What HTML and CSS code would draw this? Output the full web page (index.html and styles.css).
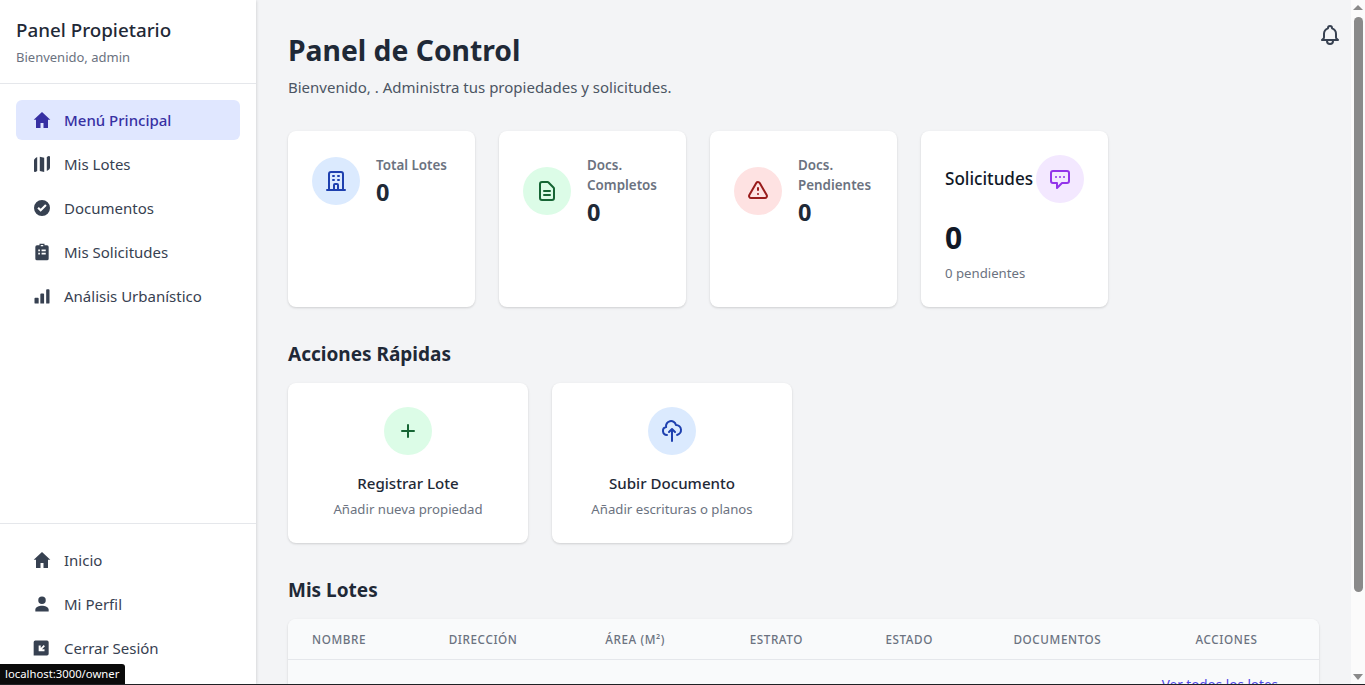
FILE: index.html
```html
<!DOCTYPE html>
<html lang="es">
<head>
<meta charset="utf-8">
<title>Panel Propietario</title>
<link rel="stylesheet" href="styles.css">
</head>
<body>
<div class="app">
  <aside class="sidebar">
    <header class="brand">
      <h1>Panel Propietario</h1>
      <p>Bienvenido, admin</p>
    </header>
    <nav class="nav nav-main">
      <a class="nav-item active"><svg class="ni" viewBox="0 0 20 20"><path d="M10 2 18.300 9.800H16V18H11.500V13H8.500V18H4V9.800H1.700z"/></svg>Menú Principal</a>
      <a class="nav-item"><svg class="ni" viewBox="0 0 20 20"><path d="M5.200 3V17L3.400 18C2.700 18.200 2 17.700 2 17V6.500C2 5.500 2.600 4.500 5.200 3zM7.800 2.800 12.200 3.800V18L7.800 17zM14.800 3 16.600 2C17.300 1.800 18 2.300 18 3V13.500C18 14.700 17.400 15.600 14.800 17z"/></svg>Mis Lotes</a>
      <a class="nav-item"><svg class="ni" viewBox="0 0 24 24"><path fill-rule="evenodd" d="M12 2.400a9.600 9.600 0 1 0 0 19.200 9.600 9.600 0 0 0 0-19.200zm-1.600 14.200-4-4 1.800-1.800 2.200 2.200 5.400-5.400 1.800 1.800z"/></svg>Documentos</a>
      <a class="nav-item"><svg class="ni" viewBox="0 0 24 24"><path fill-rule="evenodd" d="M9 2h6v2h3a2 2 0 0 1 2 2v14a2 2 0 0 1-2 2H6a2 2 0 0 1-2-2V6a2 2 0 0 1 2-2h3zM7.500 9v2h2V9zm4 0v2h5V9zm-4 4v2h2v-2zm4 0v2h5v-2zM10.500 3.500v1.500h3V3.500z"/></svg>Mis Solicitudes</a>
      <a class="nav-item"><svg class="ni" viewBox="0 0 24 24"><path d="M3 15a1 1 0 0 1 1-1h3a1 1 0 0 1 1 1v6H4a1 1 0 0 1-1-1zM10 10a1 1 0 0 1 1-1h2.500a1 1 0 0 1 1 1v11H10zM17 5a1 1 0 0 1 1-1h2a1 1 0 0 1 1 1v15a1 1 0 0 1-1 1h-3z"/></svg>Análisis Urbanístico</a>
    </nav>
    <nav class="nav nav-foot">
      <a class="nav-item"><svg class="ni" viewBox="0 0 20 20"><path d="M10 2 18.300 9.800H16V18H11.500V13H8.500V18H4V9.800H1.700z"/></svg>Inicio</a>
      <a class="nav-item"><svg class="ni" viewBox="0 0 24 24"><path d="M12 12a4.500 4.500 0 1 0 0-9 4.500 4.500 0 0 0 0 9zm0 2c-3.500 0-8 1.800-8 4.500V21h16v-2.500c0-2.700-4.500-4.500-8-4.500z"/></svg>Mi Perfil</a>
      <a class="nav-item"><svg class="ni" viewBox="0 0 24 24"><path fill-rule="evenodd" d="M4 3h14a2 2 0 0 1 2 2v14a2 2 0 0 1-2 2H2V5a2 2 0 0 1 2-2zm10 5.500L10.500 12V9H8v7h7v-2.500h-3l3.500-3.500z"/></svg>Cerrar Sesión</a>
    </nav>
  </aside>
  <main class="main">
    <button class="bell" aria-label="Notificaciones"><svg viewBox="0 0 24 24"><path d="M15 17h5l-1.405-1.405A2.032 2.032 0 0 1 18 14.158V11a6.002 6.002 0 0 0-4-5.659V5a2 2 0 1 0-4 0v.341C7.670 6.165 6 8.388 6 11v3.159c0 .538-.214 1.055-.595 1.436L4 17h5m6 0v1a3 3 0 1 1-6 0v-1m6 0H9"/></svg></button>
    <h2 class="title">Panel de Control</h2>
    <p class="subtitle">Bienvenido, . Administra tus propiedades y solicitudes.</p>

    <section class="stats">
      <article class="card stat">
        <div class="stat-row">
          <span class="disc disc-blue"><svg viewBox="0 0 24 24"><path d="M19 21V5a2 2 0 0 0-2-2H7a2 2 0 0 0-2 2v16m14 0h2m-2 0h-5m-9 0H3m2 0h5M9 7h1m-1 4h1m4-4h1m-1 4h1m-5 10v-5a1 1 0 0 1 1-1h2a1 1 0 0 1 1 1v5m-4 0h4"/></svg></span>
          <div><h3>Total Lotes</h3><strong>0</strong></div>
        </div>
      </article>
      <article class="card stat">
        <div class="stat-row">
          <span class="disc disc-green"><svg viewBox="0 0 24 24"><path d="M9 12h6m-6 4h6m2 5H7a2 2 0 0 1-2-2V5a2 2 0 0 1 2-2h5.586a1 1 0 0 1 .707.293l5.414 5.414a1 1 0 0 1 .293.707V19a2 2 0 0 1-2 2z"/></svg></span>
          <div><h3>Docs. Completos</h3><strong>0</strong></div>
        </div>
      </article>
      <article class="card stat">
        <div class="stat-row">
          <span class="disc disc-red"><svg viewBox="0 0 24 24"><path d="M12 9v2m0 4h.01m-6.938 4h13.856c1.540 0 2.502-1.667 1.732-3L13.732 4c-.77-1.333-2.694-1.333-3.464 0L3.340 16c-.77 1.333.192 3 1.732 3z"/></svg></span>
          <div><h3>Docs. Pendientes</h3><strong>0</strong></div>
        </div>
      </article>
      <article class="card requests">
        <div class="req-head">
          <h3>Solicitudes</h3>
          <span class="disc disc-purple"><svg viewBox="0 0 24 24"><path d="M8 10h.01M12 10h.01M16 10h.01M9 16H5a2 2 0 0 1-2-2V6a2 2 0 0 1 2-2h14a2 2 0 0 1 2 2v8a2 2 0 0 1-2 2h-5l-5 5v-5z"/></svg></span>
        </div>
        <strong>0</strong>
        <p>0 pendientes</p>
      </article>
    </section>

    <h2 class="section-title">Acciones Rápidas</h2>
    <section class="actions">
      <article class="card action">
        <span class="disc disc-green"><svg viewBox="0 0 24 24"><path d="M12 6v12M6 12h12"/></svg></span>
        <h3>Registrar Lote</h3>
        <p>Añadir nueva propiedad</p>
      </article>
      <article class="card action">
        <span class="disc disc-blue"><svg viewBox="0 0 24 24"><path d="M7 16a4 4 0 0 1-.88-7.903A5 5 0 1 1 15.900 6L16 6a5 5 0 0 1 1 9.900M15 13l-3-3m0 0-3 3m3-3v12"/></svg></span>
        <h3>Subir Documento</h3>
        <p>Añadir escrituras o planos</p>
      </article>
    </section>

    <h2 class="section-title lots-title">Mis Lotes</h2>
    <section class="card table-card">
      <table>
        <thead>
          <tr><th>Nombre</th><th>Dirección</th><th>Área (m²)</th><th>Estrato</th><th>Estado</th><th>Documentos</th><th>Acciones</th></tr>
        </thead>
      </table>
      <div class="table-foot"><a>Ver todos los lotes →</a></div>
    </section>
  </main>
  <div class="scrollbar" aria-hidden="true">
    <span class="arrow arrow-up"></span>
    <span class="thumb"></span>
    <span class="arrow arrow-down"></span>
  </div>
</div>
<div class="status">localhost:3000/owner</div>
</body>
</html>
```

FILE: styles.css
```css
* { box-sizing: border-box; }
html, body { margin: 0; height: 100%; overflow: hidden; }
body { font-family: "Noto Sans", "Open Sans", sans-serif; color: #1f2937; background: #f3f4f6; border-bottom: 1px solid #202124; }
h1, h2, h3, p { margin: 0; }

.app { display: flex; height: 684px; }

.sidebar { width: 256px; flex: none; display: flex; flex-direction: column; background: #fff; box-shadow: 0 1px 3px rgba(0,0,0,.1), 1px 0 3px rgba(0,0,0,.06); z-index: 1; }
.brand { padding: 16px; height: 84px; border-bottom: 1px solid #e5e7eb; }
.brand h1 { font-size: 18.800px; line-height: 28px; font-weight: 500; color: #1f2937; }
.brand p { font-size: 13px; line-height: 20px; color: #6b7280; margin-top: 3px; }

.nav { display: flex; flex-direction: column; gap: 4px; padding: 16px; }
.nav-main { flex: 1; }
.nav-foot { border-top: 1px solid #e5e7eb; }
.nav-item { display: flex; align-items: center; gap: 12px; height: 40px; padding: 0 16px; border-radius: 6px; font-size: 15px; color: #374151; }
.nav-item.active { background: #e0e7ff; color: #3730a3; font-weight: 500; }
.ni { width: 20px; height: 20px; fill: currentColor; flex: none; }

.main { flex: 1; min-width: 0; padding: 32px; overflow: hidden; position: relative; }

.scrollbar { width: 14px; flex: none; display: flex; flex-direction: column; align-items: center; background: #fbfbfb; padding: 5px 0 4px; }
.thumb { width: 9px; height: 575px; margin: 7px 0 auto; background: #8a8a8a; border-radius: 5px; }
.arrow { width: 0; height: 0; border-left: 5px solid transparent; border-right: 5px solid transparent; }
.arrow-up { border-bottom: 5px solid #8a8a8a; }
.arrow-down { border-top: 6px solid #8a8a8a; }

.bell { position: absolute; top: 23px; right: 9px; width: 24px; height: 24px; padding: 0; border: 0; background: none; }
.bell svg { width: 24px; height: 24px; display: block; fill: none; stroke: #374151; stroke-width: 2; stroke-linecap: round; stroke-linejoin: round; }

.title { font-size: 28.300px; line-height: 36px; font-weight: 700; color: #1f2937; }
.subtitle { font-size: 15px; line-height: 24px; color: #4b5563; margin-top: 7px; }

.card { background: #fff; border-radius: 8px; box-shadow: 0 1px 3px rgba(0,0,0,.1), 0 1px 2px rgba(0,0,0,.06); }
.stats { display: flex; gap: 24px; margin-top: 32px; }
.stat, .requests { width: 187px; height: 176px; padding: 24px; flex: none; }
.stat-row { display: flex; align-items: center; gap: 16px; }
.stat h3 { font-size: 13.400px; line-height: 20px; font-weight: 600; color: #6b7280; }
.stat strong { display: block; font-size: 23.500px; line-height: 32px; margin: 1px 0 -1px; font-weight: 700; color: #1f2937; }

.disc { width: 48px; height: 48px; border-radius: 50%; display: flex; align-items: center; justify-content: center; flex: none; }
.disc svg { width: 24px; height: 24px; fill: none; stroke: currentColor; stroke-width: 2; stroke-linecap: round; stroke-linejoin: round; }
.disc-blue { background: #dbeafe; color: #1e40af; }
.disc-green { background: #dcfce7; color: #166534; }
.disc-red { background: #fee2e2; color: #991b1b; }
.disc-purple { background: #f3e8ff; color: #9333ea; }

.req-head { display: flex; align-items: center; justify-content: space-between; }
.req-head h3 { font-size: 17.100px; line-height: 28px; font-weight: 500; color: #111827; white-space: nowrap; }
.requests strong { display: block; font-size: 30px; line-height: 38px; font-weight: 700; color: #111827; margin-top: 16px; }
.requests p { font-size: 13.200px; line-height: 20px; color: #6b7280; margin-top: 6px; }

.section-title { font-size: 19px; line-height: 28px; font-weight: 700; color: #1f2937; margin-top: 33px; }
.actions { display: flex; gap: 24px; margin-top: 15px; }
.action { width: 240px; height: 160px; padding: 24px; display: flex; flex-direction: column; align-items: center; text-align: center; }
.action h3 { font-size: 15.100px; line-height: 24px; font-weight: 500; color: #1f2937; margin-top: 16px; }
.action p { font-size: 13.200px; line-height: 20px; color: #6b7280; margin-top: 4px; }
.lots-title { margin-top: 33px; }

.table-card { margin-top: 15px; overflow: hidden; background: #f9fafb; }
table { width: 100%; border-collapse: separate; border-spacing: 0; }
th { padding: 12px 24px; font-size: 11.700px; line-height: 16px; height: 41px; font-weight: 500; letter-spacing: .05em; text-transform: uppercase; color: #6b7280; text-align: left; border-bottom: 1px solid #e5e7eb; background: #f9fafb; white-space: nowrap; }
.table-foot { padding: 15px 24px 16px; text-align: right; font-size: 13.500px; line-height: 20px; color: #4f46e5; }

.status { position: fixed; left: 0; bottom: 1px; width: 125px; height: 20px; padding: 0 5px 2px; display: flex; align-items: center; background: #0b0b0b; color: #fff; font-size: 11.300px; border-top-right-radius: 3px; z-index: 5; white-space: nowrap; }
```
